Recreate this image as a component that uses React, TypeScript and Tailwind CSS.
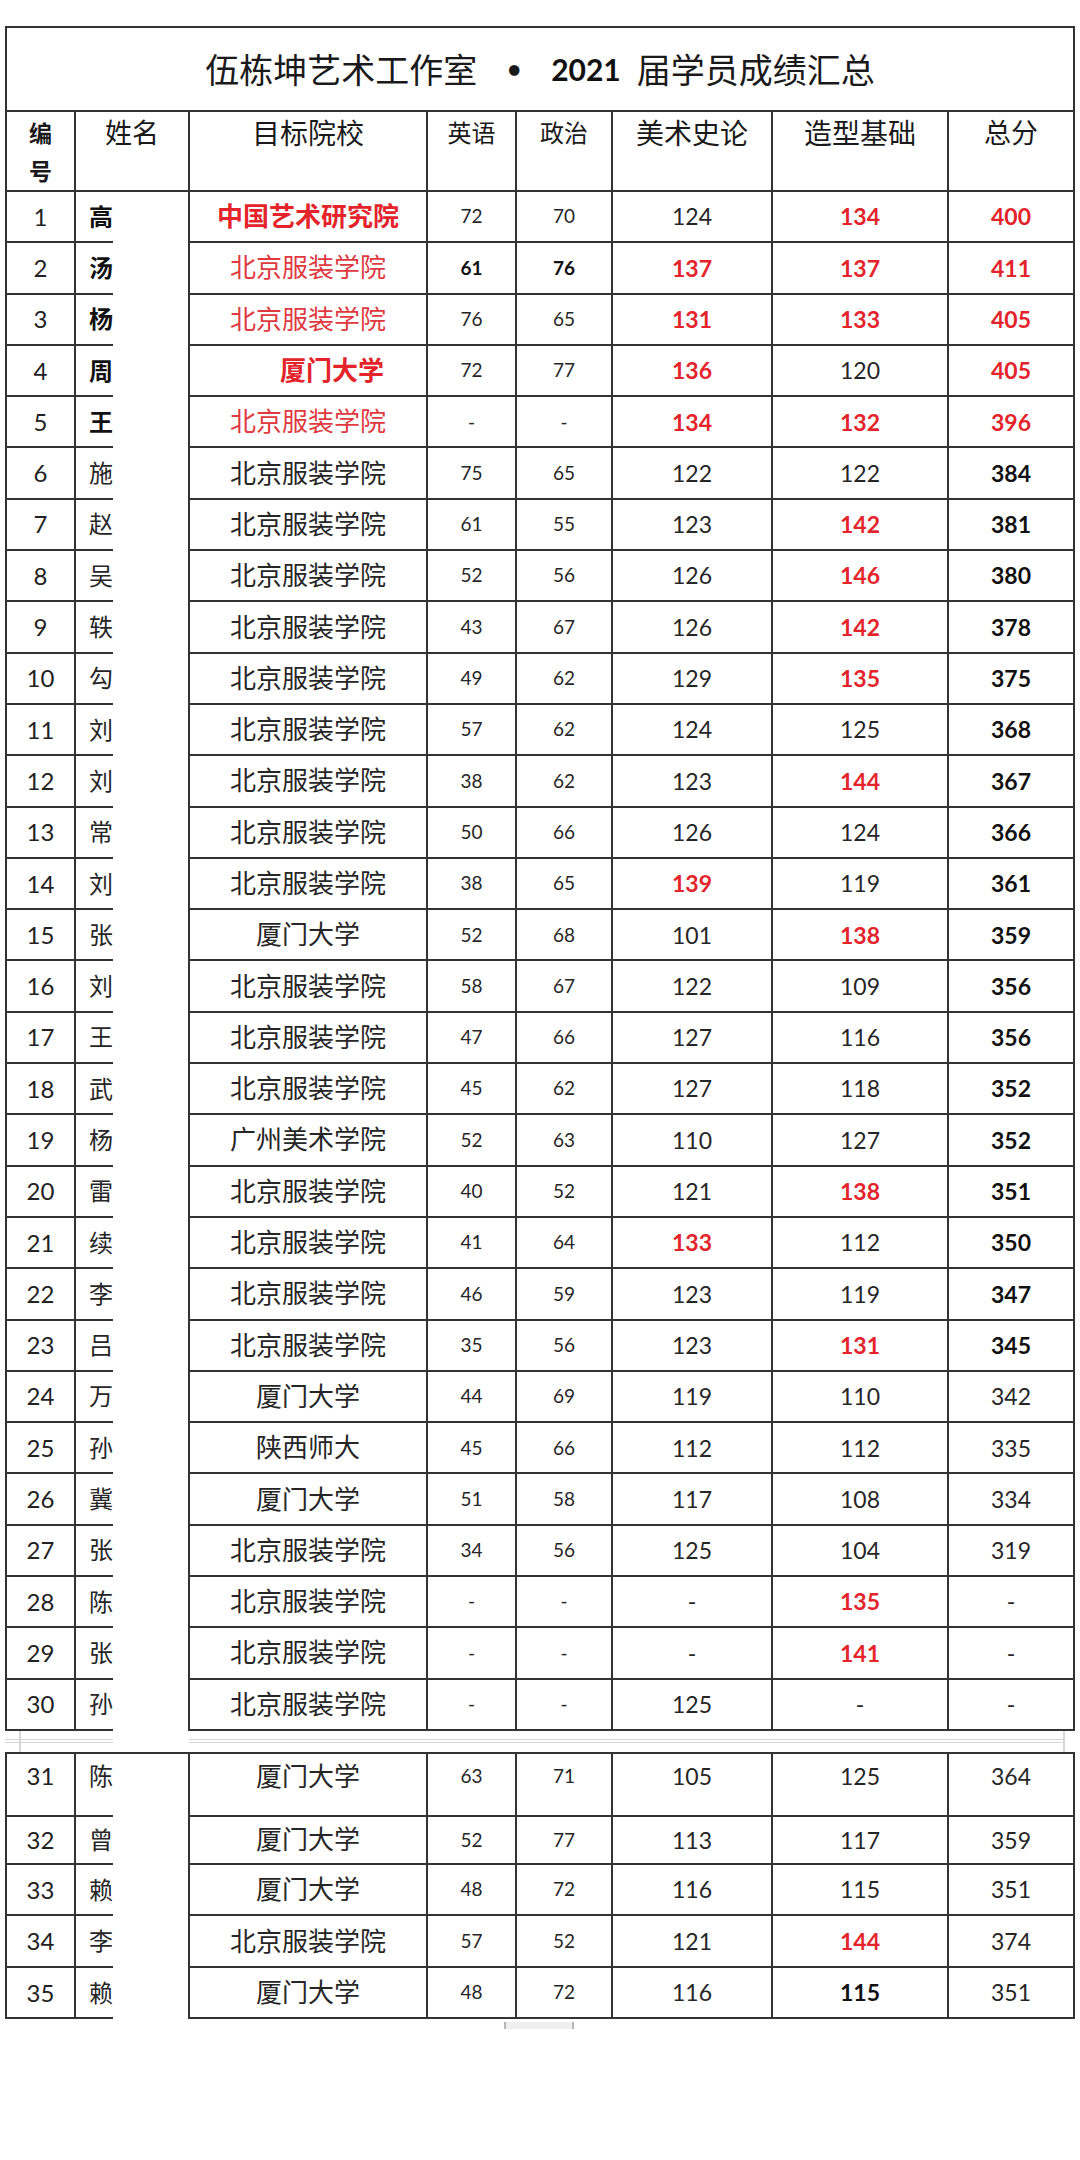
import clsx from 'clsx'

type Row = [number, string, string, string, string, string, string, string]

const TOP: Row[] = [
  [1, '高', '中国艺术研究院', '72', '70', '124', '134', '400'],
  [2, '汤', '北京服装学院', '61', '76', '137', '137', '411'],
  [3, '杨', '北京服装学院', '76', '65', '131', '133', '405'],
  [4, '周', '厦门大学', '72', '77', '136', '120', '405'],
  [5, '王', '北京服装学院', '-', '-', '134', '132', '396'],
  [6, '施', '北京服装学院', '75', '65', '122', '122', '384'],
  [7, '赵', '北京服装学院', '61', '55', '123', '142', '381'],
  [8, '吴', '北京服装学院', '52', '56', '126', '146', '380'],
  [9, '轶', '北京服装学院', '43', '67', '126', '142', '378'],
  [10, '勾', '北京服装学院', '49', '62', '129', '135', '375'],
  [11, '刘', '北京服装学院', '57', '62', '124', '125', '368'],
  [12, '刘', '北京服装学院', '38', '62', '123', '144', '367'],
  [13, '常', '北京服装学院', '50', '66', '126', '124', '366'],
  [14, '刘', '北京服装学院', '38', '65', '139', '119', '361'],
  [15, '张', '厦门大学', '52', '68', '101', '138', '359'],
  [16, '刘', '北京服装学院', '58', '67', '122', '109', '356'],
  [17, '王', '北京服装学院', '47', '66', '127', '116', '356'],
  [18, '武', '北京服装学院', '45', '62', '127', '118', '352'],
  [19, '杨', '广州美术学院', '52', '63', '110', '127', '352'],
  [20, '雷', '北京服装学院', '40', '52', '121', '138', '351'],
  [21, '续', '北京服装学院', '41', '64', '133', '112', '350'],
  [22, '李', '北京服装学院', '46', '59', '123', '119', '347'],
  [23, '吕', '北京服装学院', '35', '56', '123', '131', '345'],
  [24, '万', '厦门大学', '44', '69', '119', '110', '342'],
  [25, '孙', '陕西师大', '45', '66', '112', '112', '335'],
  [26, '冀', '厦门大学', '51', '58', '117', '108', '334'],
  [27, '张', '北京服装学院', '34', '56', '125', '104', '319'],
  [28, '陈', '北京服装学院', '-', '-', '-', '135', '-'],
  [29, '张', '北京服装学院', '-', '-', '-', '141', '-'],
  [30, '孙', '北京服装学院', '-', '-', '125', '-', '-'],
]

const BOTTOM: Row[] = [
  [31, '陈', '厦门大学', '63', '71', '105', '125', '364'],
  [32, '曾', '厦门大学', '52', '77', '113', '117', '359'],
  [33, '赖', '厦门大学', '48', '72', '116', '115', '351'],
  [34, '李', '北京服装学院', '57', '52', '121', '144', '374'],
  [35, '赖', '厦门大学', '48', '72', '116', '115', '351'],
]

const redArt = new Set([2, 3, 4, 5, 14, 21])
const redShape = new Set([1, 2, 3, 5, 7, 8, 9, 10, 12, 15, 20, 23, 28, 29, 34])

const RED = 'text-[#e3242b] font-bold'
const BOLD = 'text-[#111] font-bold'
const PLAIN = 'text-[#262626]'
const GRID = 'grid grid-cols-[69px_114px_238px_89px_96px_160px_176px_126px]'

function Cell({ children, className }: { children?: React.ReactNode; className?: string }) {
  return (
    <div className={clsx('flex items-center justify-center border-r-2 border-b-2 border-[#333] whitespace-nowrap', className)}>
      {children}
    </div>
  )
}

function HeadCell({ children, className }: { children?: React.ReactNode; className?: string }) {
  return (
    <div className={clsx('flex justify-center pt-[2px] leading-[38px] border-r-2 border-b-2 border-[#333] text-[#1a1a1a] whitespace-nowrap', className)}>
      {children}
    </div>
  )
}

function DataRow({ row, height, pad }: { row: Row; height: string; pad?: string }) {
  const [no, name, school, eng, pol, art, shape, total] = row
  const schoolStyle =
    no === 1 || no === 4 ? 'text-[#e3242b] font-bold' : no <= 5 ? 'text-[#de3a40]' : PLAIN
  const totalStyle = no <= 5 ? RED : no <= 23 ? BOLD : PLAIN
  return (
    <div className={clsx(GRID, height)}>
      <Cell className={clsx('text-[24px] text-[#222]', pad)}>{no}</Cell>
      <div className="flex border-r-2 border-[#333]">
        <div
          className={clsx(
            'w-[37px] overflow-hidden border-b-2 border-[#333] flex items-center pl-[13px] text-[24px]',
            pad,
            no <= 5 ? BOLD : PLAIN,
          )}
        >
          {name}
        </div>
      </div>
      <Cell className={clsx('text-[26px]', schoolStyle, no === 4 && 'justify-end pr-[42px]', pad)}>{school}</Cell>
      <Cell className={clsx('text-[19px]', no === 2 ? BOLD : PLAIN, pad)}>{eng}</Cell>
      <Cell className={clsx('text-[19px]', no === 2 ? BOLD : PLAIN, pad)}>{pol}</Cell>
      <Cell className={clsx('text-[23px]', redArt.has(no) ? RED : PLAIN, pad)}>{art}</Cell>
      <Cell className={clsx('text-[23px]', redShape.has(no) ? RED : no === 35 ? BOLD : PLAIN, pad)}>{shape}</Cell>
      <Cell className={clsx('text-[23px]', totalStyle, pad)}>{total}</Cell>
    </div>
  )
}

export default function App() {
  return (
    <div className="w-[1080px] h-[2160px] bg-white pt-[26px] pl-[5px] font-['Lato','Noto_Sans_CJK_SC',sans-serif]">
      <div className="w-[1070px] border-l-2 border-t-2 border-[#333]">
        <div className={GRID}>
          <Cell className="col-span-8 h-[84px] text-[#1a1a1a]">
            <span className="text-[34px]">伍栋坤艺术工作室</span>
            <span className="mx-[30px] text-[24px] font-bold">•</span>
            <span className="text-[30px] font-bold text-[#111]">2021</span>
            <span className="ml-[16px] text-[34px]">届学员成绩汇总</span>
          </Cell>
        </div>
        <div className={clsx(GRID, 'h-[80px]')}>
          <HeadCell className="text-[23px] font-bold">
            <div className="flex flex-col items-center">
              <span>编</span>
              <span>号</span>
            </div>
          </HeadCell>
          <HeadCell className="text-[27px]">姓名</HeadCell>
          <HeadCell className="text-[28px]">目标院校</HeadCell>
          <HeadCell className="text-[24px]">英语</HeadCell>
          <HeadCell className="text-[24px]">政治</HeadCell>
          <HeadCell className="text-[28px]">美术史论</HeadCell>
          <HeadCell className="text-[28px]">造型基础</HeadCell>
          <HeadCell className="text-[27px]">总分</HeadCell>
        </div>
        {TOP.map(row => (
          <DataRow key={row[0]} row={row} height="h-[51.3px]" />
        ))}
      </div>

      <div className="flex h-[21px] items-center">
        <div className="w-[14px] h-[4px] border-y border-[#d6d6d6]" />
        <div className="w-[2px] h-full bg-[#d6d6d6]" />
        <div className="w-[92px] h-[4px] border-y border-[#d6d6d6]" />
        <div className="w-[76px]" />
        <div className="w-[874px] h-[4px] border-y border-[#d6d6d6]" />
        <div className="w-[2px] h-full bg-[#d6d6d6]" />
      </div>

      <div className="w-[1070px] border-l-2 border-t-2 border-[#333]">
        <DataRow row={BOTTOM[0]} height="h-[63px]" pad="pb-[16px]" />
        <DataRow row={BOTTOM[1]} height="h-[48px]" />
        {BOTTOM.slice(2).map(row => (
          <DataRow key={row[0]} row={row} height="h-[51.5px]" />
        ))}
      </div>

      <div className="ml-[499px] mt-[3px] w-[70px] h-[7px] border-x-2 border-[#b5b5b5] bg-[#efefef]" />
    </div>
  )
}
